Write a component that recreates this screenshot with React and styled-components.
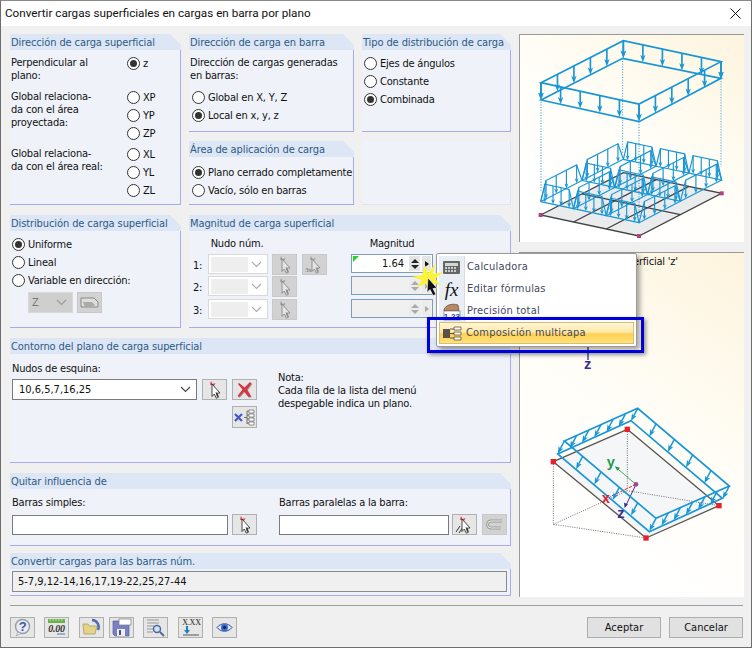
import React from 'react'
import styled, {createGlobalStyle} from 'styled-components'

const GlobalStyle = createGlobalStyle`
    html, body {
        margin: 0;
        padding: 0;
        background: #f0f0f0;
    }
    body {
        font-family: "DejaVu Sans Condensed", "DejaVu Sans", sans-serif;
        font-size: 11px;
        line-height: 13px;
        letter-spacing: -.2px;
        color: #111;
    }
`

const Window = styled.div`
    box-sizing: border-box;
    width: 752px;
    height: 648px;
    border: 1px solid #6d6d6d;
    border-top-color: #8a8a8a;
    display: flex;
    flex-direction: column;
    background: #f0f0f0;
    overflow: hidden;
    position: relative;
`
const TitleBar = styled.div`
    height: 25px;
    flex: none;
    background: #fff;
    display: flex;
    align-items: center;
    justify-content: space-between;
    padding: 0 10px 0 4px;
    font-family: Roboto, sans-serif;
    font-size: 11.7px;
    letter-spacing: 0;
`
const Main = styled.div`
    flex: none;
    display: flex;
    gap: 8px;
    padding: 8px 7px 0 9px;
    height: 572px;
    box-sizing: border-box;
`
const LeftColumn = styled.div`
    width: 501px;
    display: flex;
    flex-direction: column;
`
const TopGrid = styled.div`
    display: grid;
    grid-template-columns: 171px 165px 149px;
    grid-template-rows: 98px 64px;
    column-gap: 8px;
    row-gap: 9px;
`
const MidRow = styled.div`
    display: grid;
    grid-template-columns: 171px 1fr;
    column-gap: 8px;
    height: 113px;
    margin-top: 10px;
`
const Panel = styled.section`
    display: flex;
    flex-direction: column;
    min-width: 0;
    grid-row: ${p => p.$rows || 'auto'};
    height: ${p => p.$h ? p.$h + 'px' : 'auto'};
    margin-top: ${p => p.$mt || 0}px;
`
const PanelTitle = styled.h3`
    margin: 0;
    height: 16px;
    flex: none;
    padding: 2px 0 0 1px;
    box-sizing: border-box;
    font-weight: normal;
    font-size: 11px;
    line-height: 13px;
    letter-spacing: -.1px;
    color: #2d5a86;
    background: #dce6f4;
    white-space: nowrap;
    clip-path: polygon(0 0, calc(100% - 11px) 0, 100% 11px, 100% 100%, 0 100%);
`
const PanelBody = styled.div`
    flex: 1;
    min-height: 0;
    box-sizing: border-box;
    background: #eff3f9;
    border-right: 1px solid #a9a9ee;
    border-bottom: 1px solid #a9a9ee;
    padding: ${p => p.$pad || '6px 0 0 1px'};
    position: relative;
`
const Blank = styled.div`
    background: #eff3f9;
    border-right: 1px solid #dfe3ee;
    border-bottom: 1px solid #dfe3ee;
`
const RadioRow = styled.label`
    display: flex;
    align-items: center;
    gap: 3px;
    height: 18px;
    white-space: nowrap;
`
const RadioDot = styled.span`
    box-sizing: border-box;
    width: 13px;
    height: 13px;
    flex: none;
    border-radius: 50%;
    border: 1px solid #333;
    background: #fff;
    display: flex;
    align-items: center;
    justify-content: center;

    &::after {
        content: '';
        width: 7px;
        height: 7px;
        border-radius: 50%;
        background: ${p => p.$on ? '#333' : 'transparent'};
    }
`
const Radio = ({on, children}) =>
    <RadioRow>
        <RadioDot $on={on} />
        <span>{children}</span>
    </RadioRow>

const RadioGroup = styled.div`
    padding-left: ${p => p.$left || 0}px;
    margin-top: ${p => p.$top || 0}px;
`
const SurfaceGrid = styled.div`
    display: grid;
    grid-template-columns: 116px 1fr;
`
const SurfaceLabel = styled.div`
    height: ${p => p.$h}px;
    box-sizing: border-box;
`
const SurfaceRadios = styled.div`
    height: ${p => p.$h}px;
    margin-top: -2px;
    box-sizing: border-box;
`
const Inline = styled.div`
    display: flex;
    align-items: ${p => p.$align || 'center'};
    gap: ${p => p.$gap ?? 4}px;
    margin-top: ${p => p.$top || 0}px;
    margin-left: ${p => p.$left || 0}px;
`
const ToolButton = styled.div`
    box-sizing: border-box;
    width: 25px;
    height: ${p => p.$h || 21}px;
    flex: none;
    background: ${p => p.$off ? '#d2d2d2' : '#e6e6e6'};
    border: 1px solid ${p => p.$off ? '#c8c8c8' : '#b0b0b0'};
    display: flex;
    align-items: center;
    justify-content: center;
    margin-left: ${p => p.$ml || 0}px;
`
const Combo = styled.div`
    box-sizing: border-box;
    width: ${p => p.$w}px;
    height: ${p => p.$h || 20}px;
    flex: none;
    display: flex;
    align-items: center;
    justify-content: space-between;
    padding: 0 5px 0 2px;
    background: ${p => p.$gray ? '#cfcfcf' : '#fff'};
    border: 1px solid ${p => p.$dark ? '#7a7a7a' : '#d9d9d9'};
`
const ComboFill = styled.span`
    width: 37px;
    height: 15px;
    background: #eeeeee;
`
const ComboValue = styled.span`
    padding-left: ${p => p.$pad || 4}px;
    letter-spacing: 0;
    color: ${p => p.$gray ? '#777' : '#111'};
`
const TextBox = styled.div`
    box-sizing: border-box;
    width: ${p => p.$w ? p.$w + 'px' : '100%'};
    height: ${p => p.$h || 20}px;
    flex: none;
    padding: 3px 5px;
    border: 1px solid ${p => p.$border || '#7a7a7a'};
    background: ${p => p.$bg || '#fff'};
    letter-spacing: 0;
    white-space: nowrap;
`
const MagnitudeHead = styled.div`
    display: flex;
    height: 23px;
    padding-top: 6px;
    box-sizing: border-box;
`
const HeadCell = styled.span`
    width: ${p => p.$w}px;
    text-align: center;
    flex: none;
`
const MagRow = styled.div`
    display: flex;
    align-items: flex-start;
    height: ${p => p.$h}px;
`
const RowNum = styled.span`
    width: 17px;
    flex: none;
    padding: 5px 0 0 2px;
    box-sizing: border-box;
`
const MagInput = styled.div`
    box-sizing: border-box;
    position: relative;
    width: 82px;
    height: 19px;
    flex: none;
    margin-left: ${p => p.$ml}px;
    border: 1px solid #7f9db9;
    background: ${p => p.$off ? '#f0f0f0' : '#fff'};
    display: flex;
    align-items: center;
    justify-content: flex-end;
    padding-right: 1px;
    gap: 2px;
`
const GreenTick = styled.span`
    position: absolute;
    left: 1px;
    top: 1px;
    width: 0;
    height: 0;
    border-top: 6px solid #22d822;
    border-right: 6px solid transparent;
`
const MagValue = styled.span`
    margin-right: 3px;
    letter-spacing: 0;
`
const Spinner = styled.span`
    width: 11px;
    height: 15px;
    flex: none;
    background: ${p => p.$off ? '#ececec' : '#e4e4e4'};
    display: flex;
    flex-direction: column;
    align-items: center;
    justify-content: center;
    gap: 2px;
`
const ArrowUp = styled.span`
    width: 0;
    height: 0;
    border-left: 4px solid transparent;
    border-right: 4px solid transparent;
    border-bottom: 4px solid ${p => p.$off ? '#aaa' : '#222'};
`
const ArrowDown = styled(ArrowUp)`
    border-bottom: 0;
    border-top: 4px solid ${p => p.$off ? '#aaa' : '#222'};
`
const MoreBtn = styled.span`
    width: 9px;
    height: 15px;
    flex: none;
    background: ${p => p.$off ? '#ececec' : '#e4e4e4'};
    display: flex;
    align-items: center;
    justify-content: center;

    &::after {
        content: '';
        border-left: 4px solid ${p => p.$off ? '#aaa' : '#111'};
        border-top: 3px solid transparent;
        border-bottom: 3px solid transparent;
    }
`
const Note = styled.div`
    margin-left: 21px;
    padding-top: 9px;
`
const FieldLabel = styled.div`
    height: ${p => p.$h || 15}px;
`
const ContourGrid = styled.div`
    display: flex;
`
const ButtonStack = styled.div`
    display: flex;
    flex-direction: column;
    align-items: flex-end;
    gap: 6px;
`
const FieldCol = styled.div`
    width: ${p => p.$w}px;
    flex: none;
`
const RightColumn = styled.div`
    width: 225px;
    display: flex;
    flex-direction: column;
    gap: 10px;
`
const Figure = styled.div`
    box-sizing: border-box;
    height: ${p => p.$h}px;
    flex: none;
    border-top: 1px solid #999;
    border-left: 1px solid #999;
    background: linear-gradient(215deg, #fdf4dd 0%, #fffdf6 45%, #ffffff 80%);
    position: relative;

    & svg {
        display: block;
    }
`
const FigureCaption = styled.div`
    position: absolute;
    left: 4px;
    top: 2px;
    white-space: nowrap;
`
const Footer = styled.div`
    flex: 1;
    margin: 7px 8px 0 9px;
    border-top: 1px solid #a0a0a0;
    padding-top: 11px;
    display: flex;
    justify-content: space-between;
    align-items: flex-start;
`
const FooterTools = styled.div`
    display: flex;
`
const FooterActions = styled.div`
    display: flex;
    gap: 8px;
`
const DialogButton = styled.button`
    box-sizing: border-box;
    width: 74px;
    height: 21px;
    padding: 0;
    font: inherit;
    letter-spacing: 0;
    color: #111;
    background: #e1e1e1;
    border: 1px solid #adadad;
`
const Menu = styled.div`
    position: absolute;
    left: 435px;
    top: 252px;
    width: 201px;
    box-sizing: border-box;
    border: 1px solid #9a9a9a;
    border-radius: 2px;
    background: #fff;
    padding: 2px;
    box-shadow: 3px 3px 5px rgba(0, 0, 0, .35);
`
const MenuItem = styled.div`
    display: flex;
    align-items: center;
    height: 22px;
    box-sizing: border-box;
    color: #3f4a60;
    letter-spacing: .2px;
    background: ${p => p.$active
        ? 'linear-gradient(#fff6d8 0%, #ffe9a8 45%, #ffd050 55%, #ffe27f 100%)'
        : 'transparent'};
    border: ${p => p.$active ? '1px solid #d8bd74' : '0'};
`
const MenuIcon = styled.span`
    width: 25px;
    height: 22px;
    flex: none;
    margin-right: ${p => p.$active ? 1 : 2}px;
    display: flex;
    align-items: center;
    justify-content: center;
    background: ${p => p.$active ? 'transparent' : '#e9eef4'};
    border-right: ${p => p.$active ? '0' : '1px solid #d5dbe3'};
`
const MenuLabel = styled.span`
    margin-top: -2px;
`
const FxGlyph = styled.span`
    font-family: "Liberation Serif", serif;
    font-style: italic;
    font-size: 19px;
    color: #111;
    letter-spacing: 0;
`
const Highlight = styled.div`
    position: absolute;
    left: 426px;
    top: 316px;
    width: 217px;
    height: 36px;
    box-sizing: border-box;
    border: 3px solid #0000dc;
    box-shadow: 2px 2px 4px rgba(0, 0, 0, .4);
    pointer-events: none;
`
const CursorMark = styled.svg`
    position: absolute;
    left: 409px;
    top: 262px;
`

const Chevron = ({color = '#777'}) =>
    <svg width="11" height="7" viewBox="0 0 11 7">
        <path d="M1 1l4.5 4.5L10 1" fill="none" stroke={color} strokeWidth="1.1" />
    </svg>

const PickIcon = ({off, three, lines}) =>
    <svg width="23" height="19" viewBox="0 0 23 19">
        {three && <text x="2" y="17" fontSize="7" fontFamily="Liberation Serif" fill="#777">3x</text>}
        <path d="M7 4.500l1-3.500 1.500 3 3-1-1.500 3z" fill={off ? '#9a9a9a' : '#d83a52'} />
        {lines && <path d="M3 17l4-6M6 18l4-6" stroke="#333" strokeWidth="1" />}
        <path d="M9 4l8 9-3.500.2 2 4-2.200 1-2-4.200L9 16.500z" fill={off ? '#e4e4e4' : '#fff'} stroke={off ? '#888' : '#333'} strokeWidth=".9" />
        <path d="M12.500 12l1.500 5 1.500-.7-1-3z" fill={off ? '#888' : '#333'} />
    </svg>

const CrossIcon = () =>
    <svg width="21" height="19" viewBox="0 0 21 19">
        <path d="M5 3l5.500 4.500L16 2l1.500 1.500-4.500 6 4 7-2.500.5-4.500-5.500-5 5.500-1.500-1 5-6.500L4 4z" fill="#999" transform="translate(.8 .8)" />
        <path d="M5 3l5.500 4.500L16 2l1.500 1.500-4.500 6 4 7-2.500.5-4.500-5.500-5 5.500-1.500-1 5-6.500L4 4z" fill="#d8343e" />
    </svg>

const TreeIcon = ({size = 23, cross = true}) =>
    <svg width={size} height={size * 19 / 23} viewBox="0 0 23 19">
        {cross && <path d="M2 6l7 7M9 6l-7 7" stroke="#3f5cc4" strokeWidth="2.200" />}
        <path d="M11 9.500h3M14 3v13M14 3h2M14 7h2M14 11h2M14 15h2" stroke="#555" strokeWidth=".8" fill="none" />
        <path d="M16 2h5v3h-5zM16 6h5v3h-5zM16 10h5v3h-5zM16 14h5v3h-5z" fill="#fff" stroke="#666" strokeWidth=".7" />
    </svg>

const FormulaBtnIcon = () =>
    <svg width="23" height="17" viewBox="0 0 23 17">
        <path d="M3 4h13l4 4v5H3z" fill="#ddd" stroke="#888" />
        <path d="M5 8h9l3 3-3 2H7z" fill="#aaa" />
    </svg>

const UndoIcon = () =>
    <svg width="23" height="17" viewBox="0 0 23 17">
        <path d="M19 5H8a3.500 3.500 0 000 7h10" fill="none" stroke="#999" strokeWidth="3" />
        <path d="M19 5H8a3.500 3.500 0 000 7h10" fill="none" stroke="#eee" strokeWidth="1" />
    </svg>

const HelpIcon = () =>
    <svg width="21" height="19" viewBox="0 0 21 19">
        <circle cx="10.500" cy="8.500" r="7" fill="#e8ebf4" stroke="#9a9ea8" strokeWidth="1.500" />
        <path d="M6 14l-2 4 5-2.500z" fill="#e8ebf4" stroke="#9a9ea8" strokeWidth=".7" />
        <text x="10.500" y="13" fontSize="13" fontWeight="bold" textAnchor="middle" fontFamily="Liberation Sans" fill="#3a5a96">?</text>
    </svg>

const UnitsIcon = () =>
    <svg width="21" height="19" viewBox="0 0 21 19">
        <rect x="2" y="1" width="17" height="4" fill="#6cb04a" />
        <path d="M4 1v2M7 1v2M10 1v2M13 1v2M16 1v2" stroke="#d8efcc" strokeWidth=".7" />
        <text x="10.500" y="14" fontSize="10" fontStyle="italic" fontWeight="bold" textAnchor="middle" fontFamily="Liberation Serif" fill="#333">0.00</text>
        <path d="M11 16h8" stroke="#5570b8" />
    </svg>

const FolderIcon = () =>
    <svg width="21" height="19" viewBox="0 0 21 19">
        <path d="M11 2a7 7 0 016 10" fill="none" stroke="#4a6cb0" strokeWidth="2.500" />
        <path d="M2 6h5l1.500 2H16l-2 8H3z" fill="#e4d388" stroke="#a89c60" strokeWidth=".8" />
    </svg>

const SaveIcon = () =>
    <svg width="21" height="19" viewBox="0 0 21 19">
        <path d="M2 3h16v15H4l-2-2z" fill="#7880c4" stroke="#5a5f98" strokeWidth=".7" />
        <rect x="8" y="1" width="12" height="6" fill="#fff" stroke="#778" strokeWidth=".7" />
        <rect x="6" y="11" width="8" height="7" fill="#eee" />
        <rect x="8" y="12" width="2" height="5" fill="#4a4f8c" />
    </svg>

const SearchIcon = () =>
    <svg width="21" height="19" viewBox="0 0 21 19">
        <path d="M2 2h12M2 5h12M2 8h7M2 11h6M2 14h6" stroke="#999" strokeWidth="1" />
        <circle cx="12" cy="11" r="3.500" fill="#cfe2f6" stroke="#4a6a9c" strokeWidth="1.500" />
        <path d="M15 14l4 4" stroke="#4a6a9c" strokeWidth="2" />
    </svg>

const DecimalIcon = () =>
    <svg width="21" height="19" viewBox="0 0 21 19">
        <text x="11.500" y="7" fontSize="8" textAnchor="middle" fontFamily="Liberation Serif" fill="#222">X.XX</text>
        <path d="M7 8v6" stroke="#1b7fc4" strokeWidth="2" />
        <path d="M4 12l3 4 3-4z" fill="#1b7fc4" />
        <path d="M3 17h16" stroke="#555" />
    </svg>

const EyeIcon = () =>
    <svg width="21" height="19" viewBox="0 0 21 19">
        <path d="M3 9.500c4-5 11-5 15 0-4 5-11 5-15 0z" fill="#dfe6f6" stroke="#33479c" strokeWidth="1" />
        <circle cx="10.500" cy="9.500" r="3.500" fill="#3567c9" />
        <circle cx="10.500" cy="9.500" r="1.400" fill="#101c50" />
    </svg>

const CalcIcon = () =>
    <svg width="19" height="17" viewBox="0 0 19 17">
        <rect x="1" y="2" width="17" height="13" rx="1" fill="#666" />
        <rect x="3" y="4" width="13" height="3" fill="#cfd8d2" />
        <path d="M3 9h2M6 9h2M9 9h2M12 9h2M3 12h2M6 12h2M9 12h2M12 12h2" stroke="#eee" strokeWidth="1.500" />
    </svg>

const PrecisionIcon = () =>
    <svg width="21" height="20" viewBox="0 0 21 20">
        <path d="M3 9c1-5 8-7 14-5l1 6H3z" fill="#b58a63" stroke="#60452f" strokeWidth=".7" />
        <rect x="3" y="10" width="16" height="9" fill="#fff" stroke="#667" strokeWidth=".6" />
        <text x="11" y="18" fontSize="8" fontWeight="bold" textAnchor="middle" fontFamily="Liberation Sans" fill="#274a8c">1.23</text>
    </svg>

const LayersIcon = () =>
    <svg width="21" height="15" viewBox="0 0 21 15">
        <rect x="1" y="3" width="7" height="9" fill="#57534a" />
        <path d="M8 3h4M8 7.500h4M8 12h4" stroke="#333" strokeWidth=".8" />
        <path d="M12 1h7v3h-7zM12 6h7v3h-7zM12 11h7v3h-7z" fill="#fff8e0" stroke="#444" strokeWidth=".7" />
    </svg>

// figures are drawn in reference coordinates x3, one unit is a third of a pixel
const LOAD = '#1896d6'
const lerp = (a, b, t) => [a[0] + (b[0] - a[0]) * t, a[1] + (b[1] - a[1]) * t]
const line = pts => pts.map(p => p[0].toFixed(1) + ',' + p[1].toFixed(1)).join(' ')

const Arrow = ({from, to, width = 5, head = 22, half = 8}) => {
    const dx = to[0] - from[0]
    const dy = to[1] - from[1]
    const len = Math.hypot(dx, dy) || 1
    const ux = dx / len
    const uy = dy / len
    const base = [to[0] - ux * head, to[1] - uy * head]
    const notch = [to[0] - ux * head * .75, to[1] - uy * head * .75]
    return <g>
        <line x1={from[0]} y1={from[1]} x2={notch[0]} y2={notch[1]} stroke={LOAD} strokeWidth={width} />
        <polygon
            fill={LOAD}
            points={line([to, [base[0] - uy * half, base[1] + ux * half], notch, [base[0] + uy * half, base[1] - ux * half]])}
        />
    </g>
}

const EdgeLoad = ({a, b, da, count, width, head, half, skipEnds}) => {
    const items = []
    for (let k = skipEnds ? 1 : 0; k <= (skipEnds ? count - 1 : count); k++) {
        const p = lerp(a, b, k / count)
        items.push(<Arrow key={k} from={p} to={[p[0] + da[0], p[1] + da[1]]} width={width} head={head} half={half} />)
    }
    return <g>{items}</g>
}

const Square = ({at, size = 8, color}) =>
    <rect x={at[0] - size} y={at[1] - size} width={size * 2} height={size * 2} fill={color} />

const Ridge = ({a, b, lift, rise}) => {
    const base0 = [a[0], a[1] - lift]
    const base1 = [b[0], b[1] - lift]
    const top0 = lerp(base0, base1, .13)
    const top1 = lerp(base0, base1, .87)
    const up = p => [p[0], p[1] - rise]
    const items = []
    for (let k = 0; k < 4; k++) {
        const p = lerp(top0, top1, k / 3)
        items.push(<Arrow key={k} from={up(p)} to={p} width={3.500} head={15} half={6} />)
    }
    return <g>
        <polyline points={line([base0, up(top0), up(top1), base1, base0])} fill="none" stroke={LOAD} strokeWidth="3.500" />
        {items}
    </g>
}

const PlaneFigure = () => {
    const top = {l: [93, 188], t: [340, 62], r: [633, 125], b: [387, 252]}
    const low = {l: [93, 240], t: [338, 115], r: [633, 175], b: [387, 305]}
    const drop = [0, 52]
    const plate = {l: [92, 585], t: [340, 458], r: [635, 520], b: [387, 648]}
    const cell = (u, v) => lerp(lerp(plate.l, plate.t, u), lerp(plate.b, plate.r, u), v)
    const ridges = []
    const us = [0, .5, 1]
    const vs = [0, 1 / 3, 2 / 3, 1]
    us.forEach(u => vs.slice(1).forEach((v, i) =>
        ridges.push(<Ridge key={'u' + u + i} a={cell(u, vs[i])} b={cell(u, v)} lift={40} rise={55} />)))
    vs.forEach(v => us.slice(1).forEach((u, i) =>
        ridges.push(<Ridge key={'v' + v + i} a={cell(us[i], v)} b={cell(u, v)} lift={40} rise={55} />)))
    return <svg width="224" height="207" viewBox="30 45 672 621">
        <polygon points={line([plate.l, plate.t, plate.r, plate.b])} fill="#e9ebec" stroke="#444" strokeWidth="4" />
        {[1 / 3, 2 / 3].map(v => {
            const a = cell(0, v)
            const b = cell(1, v)
            return <line key={v} x1={a[0]} y1={a[1]} x2={b[0]} y2={b[1]} stroke="#444" strokeWidth="4" />
        })}
        <line x1={cell(.5, 0)[0]} y1={cell(.5, 0)[1]} x2={cell(.5, 1)[0]} y2={cell(.5, 1)[1]} stroke="#444" strokeWidth="4" />
        {ridges}
        <path d="M93 245V515M338 115V400M387 305V590M633 175V440" stroke={LOAD} strokeWidth="3" strokeDasharray="3 5" fill="none" />
        <polygon points={line([low.l, low.t, low.r, low.b])} fill="none" stroke={LOAD} strokeWidth="5" />
        <polygon points={line([top.l, top.t, top.r, top.b])} fill="none" stroke={LOAD} strokeWidth="5" />
        <EdgeLoad a={top.l} b={top.t} da={drop} count={5} />
        <EdgeLoad a={top.t} b={top.r} da={drop} count={5} />
        <EdgeLoad a={top.l} b={top.b} da={drop} count={5} />
        <EdgeLoad a={top.b} b={top.r} da={drop} count={5} />
        {[plate.l, plate.r, plate.b].map((p, i) => <Square key={i} at={p} size={6} color="#b0407f" />)}
    </svg>
}

const SlopeFigure = () => {
    const A = [163, 213]
    const B = [383, 115]
    const C = [658, 348]
    const D = [438, 445]
    const a = [143, 252]
    const b = [363, 152]
    const c = [637, 385]
    const d = [418, 485]
    const drop = [-20, 38]
    const small = {width: 4.500, head: 22, half: 8}
    return <svg width="224" height="344" viewBox="30 -351 672 1032">
        <polygon points="130,275 352,178 627,407 408,504" fill="#f5f6f8" />
        <path d="M130 275V463L408 504M130 463L352 362M352 178V362L627 407" fill="none" stroke="#555" strokeWidth="2.500" strokeDasharray="3 4" />
        <path d="M130 275L352 178M352 178L627 407M627 407L408 504M408 504L130 275" fill="none" stroke="#5a5550" strokeWidth="4" />
        <path d="M378 343L320 294" stroke="#1f9a4b" strokeWidth="2.500" />
        <polygon points="314,289 330,293 322,302" fill="#1f9a4b" />
        <path d="M378 343L300 380" stroke="#e0202c" strokeWidth="3" strokeDasharray="10 4" />
        <path d="M378 343L346 410" stroke="#40308f" strokeWidth="3" />
        <polygon points="344,414 342,398 354,403" fill="#40308f" />
        <circle cx="378" cy="343" r="7" fill="#a4458f" />
        <polygon points={line([a, b, c, d])} fill="none" stroke={LOAD} strokeWidth="5" />
        <polygon points={line([A, B, C, D])} fill="none" stroke={LOAD} strokeWidth="5" />
        <EdgeLoad a={A} b={B} da={drop} count={6} {...small} />
        <EdgeLoad a={B} b={C} da={drop} count={5} skipEnds {...small} />
        <EdgeLoad a={A} b={D} da={drop} count={5} skipEnds {...small} />
        <EdgeLoad a={D} b={C} da={drop} count={6} {...small} />
        {[[130, 275], [352, 178], [627, 407], [408, 504]].map((p, i) => <Square key={i} at={p} color="#e8202c" />)}
        <text x="290" y="290" fontSize="44" fontWeight="bold" fontFamily="Liberation Sans" fill="#1f9a4b">y</text>
        <text x="275" y="398" fontSize="44" fontWeight="bold" fontFamily="Liberation Sans" fill="#e0202c">x</text>
        <text x="322" y="445" fontSize="44" fontWeight="bold" fontFamily="Liberation Sans" fill="#3a2f8f">z</text>
        <path d="M234 -90V-30" stroke="#3a2f8f" strokeWidth="4" />
        <text x="222" y="-2" fontSize="44" fontWeight="bold" fontFamily="Liberation Sans" fill="#3a2f8f">z</text>
    </svg>
}

const Spin = ({off}) =>
    <Spinner $off={off}>
        <ArrowUp $off={off} />
        <ArrowDown $off={off} />
    </Spinner>

const MagnitudeRow = ({n, h, value, extra}) =>
    <MagRow $h={h}>
        <RowNum>{n}:</RowNum>
        <Combo $w={60}><ComboFill /><Chevron color="#aaa" /></Combo>
        <ToolButton $off $ml={4}><PickIcon off /></ToolButton>
        {extra && <ToolButton $off $ml={5}><PickIcon off three /></ToolButton>}
        <MagInput $off={!value} $ml={extra ? 24 : 54}>
            {value && <GreenTick />}
            {value && <MagValue>{value}</MagValue>}
            <Spin off={!value} />
            <MoreBtn $off={!value} />
        </MagInput>
    </MagRow>

const App = () =>
    <Window>
        <GlobalStyle />
        <TitleBar>
            <span>Convertir cargas superficiales en cargas en barra por plano</span>
            <svg width="11" height="11" viewBox="0 0 11 11">
                <path d="M.5.5l10 10M10.500.5l-10 10" stroke="#111" />
            </svg>
        </TitleBar>
        <Main>
            <LeftColumn>
                <TopGrid>
                    <Panel $rows="1 / span 2">
                        <PanelTitle>Dirección de carga superficial</PanelTitle>
                        <PanelBody>
                            <SurfaceGrid>
                                <SurfaceLabel $h={34}>Perpendicular al<br />plano:</SurfaceLabel>
                                <SurfaceRadios $h={34}><Radio on>z</Radio></SurfaceRadios>
                                <SurfaceLabel $h={57}>Global relaciona-<br />da con el área<br />proyectada:</SurfaceLabel>
                                <SurfaceRadios $h={57}>
                                    <Radio>XP</Radio>
                                    <Radio>YP</Radio>
                                    <Radio>ZP</Radio>
                                </SurfaceRadios>
                                <SurfaceLabel $h={54}>Global relaciona-<br />da con el área real:</SurfaceLabel>
                                <SurfaceRadios $h={54}>
                                    <Radio>XL</Radio>
                                    <Radio>YL</Radio>
                                    <Radio>ZL</Radio>
                                </SurfaceRadios>
                            </SurfaceGrid>
                        </PanelBody>
                    </Panel>
                    <Panel>
                        <PanelTitle>Dirección de carga en barra</PanelTitle>
                        <PanelBody>
                            <div>Dirección de cargas generadas<br />en barras:</div>
                            <RadioGroup $left={2} $top={6}>
                                <Radio>Global en X, Y, Z</Radio>
                                <Radio on>Local en x, y, z</Radio>
                            </RadioGroup>
                        </PanelBody>
                    </Panel>
                    <Panel>
                        <PanelTitle>Tipo de distribución de carga</PanelTitle>
                        <PanelBody $pad="4px 0 0 2px">
                            <Radio>Ejes de ángulos</Radio>
                            <Radio>Constante</Radio>
                            <Radio on>Combinada</Radio>
                        </PanelBody>
                    </Panel>
                    <Panel>
                        <PanelTitle>Área de aplicación de carga</PanelTitle>
                        <PanelBody $pad="6px 0 0 3px">
                            <Radio on>Plano cerrado completamente</Radio>
                            <Radio>Vacío, sólo en barras</Radio>
                        </PanelBody>
                    </Panel>
                    <Blank />
                </TopGrid>
                <MidRow>
                    <Panel>
                        <PanelTitle>Distribución de carga superficial</PanelTitle>
                        <PanelBody $pad="4px 0 0 2px">
                            <Radio on>Uniforme</Radio>
                            <Radio>Lineal</Radio>
                            <Radio>Variable en dirección:</Radio>
                            <Inline $left={16} $top={3} $gap={4}>
                                <Combo $w={45} $h={21} $gray $dark={false}>
                                    <ComboValue $gray $pad={1}>Z</ComboValue>
                                    <Chevron color="#999" />
                                </Combo>
                                <ToolButton $off><FormulaBtnIcon /></ToolButton>
                            </Inline>
                        </PanelBody>
                    </Panel>
                    <Panel>
                        <PanelTitle>Magnitud de carga superficial</PanelTitle>
                        <PanelBody $pad="0 0 0 2px">
                            <MagnitudeHead>
                                <HeadCell $w={92}>Nudo núm.</HeadCell>
                                <HeadCell $w={218}>Magnitud</HeadCell>
                            </MagnitudeHead>
                            <MagnitudeRow n={1} h={22} value="1.64" extra />
                            <MagnitudeRow n={2} h={23} />
                            <MagnitudeRow n={3} h={22} />
                        </PanelBody>
                    </Panel>
                </MidRow>
                <Panel $h={125} $mt={10}>
                    <PanelTitle>Contorno del plano de carga superficial</PanelTitle>
                    <PanelBody $pad="8px 0 0 2px">
                        <ContourGrid>
                            <div>
                                <FieldLabel $h={17}>Nudos de esquina:</FieldLabel>
                                <Inline $gap={5} $align="flex-start">
                                    <Combo $w={185} $h={21} $dark>
                                        <ComboValue>10,6,5,7,16,25</ComboValue>
                                        <Chevron color="#444" />
                                    </Combo>
                                    <ButtonStack>
                                        <ToolButton><PickIcon /></ToolButton>
                                    </ButtonStack>
                                    <ButtonStack>
                                        <ToolButton><CrossIcon /></ToolButton>
                                        <ToolButton $h={22}><TreeIcon /></ToolButton>
                                    </ButtonStack>
                                </Inline>
                            </div>
                            <Note>
                                Nota:<br />
                                Cada fila de la lista del menú<br />
                                despegable indica un plano.
                            </Note>
                        </ContourGrid>
                    </PanelBody>
                </Panel>
                <Panel $h={73} $mt={10}>
                    <PanelTitle>Quitar influencia de</PanelTitle>
                    <PanelBody $pad="7px 0 0 2px">
                        <Inline $gap={0} $align="flex-start">
                            <FieldCol $w={267}>
                                <FieldLabel $h={18}>Barras simples:</FieldLabel>
                                <Inline $gap={4}>
                                    <TextBox $w={216} />
                                    <ToolButton><PickIcon /></ToolButton>
                                </Inline>
                            </FieldCol>
                            <FieldCol $w={230}>
                                <FieldLabel $h={18}>Barras paralelas a la barra:</FieldLabel>
                                <Inline $gap={3}>
                                    <TextBox $w={170} />
                                    <ToolButton><PickIcon lines /></ToolButton>
                                    <ToolButton $off $ml={2}><UndoIcon /></ToolButton>
                                </Inline>
                            </FieldCol>
                        </Inline>
                    </PanelBody>
                </Panel>
                <Panel $h={43} $mt={7}>
                    <PanelTitle>Convertir cargas para las barras núm.</PanelTitle>
                    <PanelBody $pad="2px 3px 0 2px">
                        <TextBox $h={21} $bg="#f0f0f0" $border="#8a8a8a">5-7,9,12-14,16,17,19-22,25,27-44</TextBox>
                    </PanelBody>
                </Panel>
            </LeftColumn>
            <RightColumn>
                <Figure $h={208}><PlaneFigure /></Figure>
                <Figure $h={345}>
                    <FigureCaption>Dirección de carga superficial 'z'</FigureCaption>
                    <SlopeFigure />
                </Figure>
            </RightColumn>
        </Main>
        <Footer>
            <FooterTools>
                <ToolButton><HelpIcon /></ToolButton>
                <ToolButton $ml={9}><UnitsIcon /></ToolButton>
                <ToolButton $ml={10}><FolderIcon /></ToolButton>
                <ToolButton $ml={5}><SaveIcon /></ToolButton>
                <ToolButton $ml={9}><SearchIcon /></ToolButton>
                <ToolButton $ml={10}><DecimalIcon /></ToolButton>
                <ToolButton $ml={9}><EyeIcon /></ToolButton>
            </FooterTools>
            <FooterActions>
                <DialogButton>Aceptar</DialogButton>
                <DialogButton>Cancelar</DialogButton>
            </FooterActions>
        </Footer>
        <Menu>
            <MenuItem><MenuIcon><CalcIcon /></MenuIcon><MenuLabel>Calculadora</MenuLabel></MenuItem>
            <MenuItem><MenuIcon><FxGlyph>fx</FxGlyph></MenuIcon><MenuLabel>Editar fórmulas</MenuLabel></MenuItem>
            <MenuItem><MenuIcon><PrecisionIcon /></MenuIcon><MenuLabel>Precisión total</MenuLabel></MenuItem>
            <MenuItem $active><MenuIcon $active><LayersIcon /></MenuIcon><MenuLabel>Composición multicapa</MenuLabel></MenuItem>
        </Menu>
        <Highlight />
        <CursorMark width="34" height="34" viewBox="0 0 34 34">
            <polygon points="15,2 18,10 25,1 23,11 33,9 25,16 31,22 22,20 20,28 16,21 7,24 12,17 2,14 12,12" fill="#fbf43a" />
            <path d="M18 15l9 10-4 .5 3 6-3 1-3-6-3 3z" fill="#111" stroke="#fff" strokeWidth=".6" />
        </CursorMark>
    </Window>

export default App
